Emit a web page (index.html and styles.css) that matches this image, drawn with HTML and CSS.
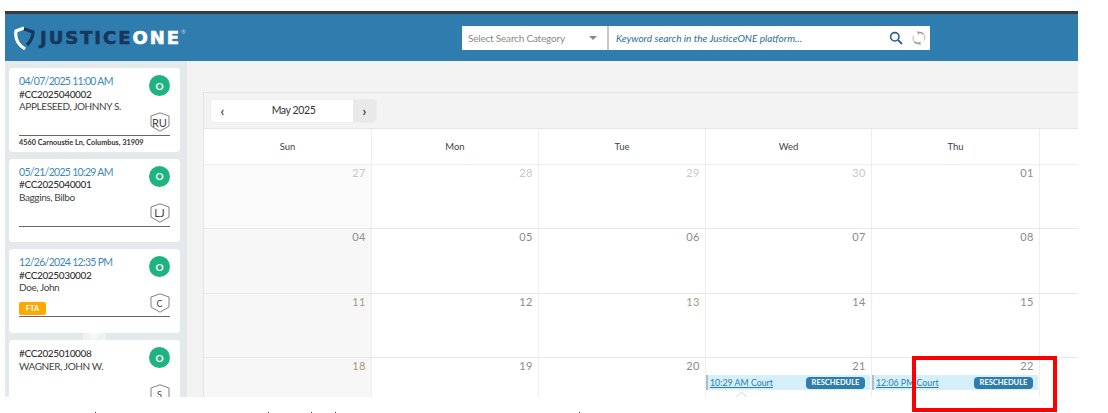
FILE: index.html
```html
<!DOCTYPE html>
<html lang="en">
<head>
<meta charset="utf-8">
<title>JusticeONE Calendar</title>
<link rel="stylesheet" href="styles.css">
</head>
<body>
<div class="app">
  <header class="topbar">
    <div class="logo">
      <svg class="logo-mark" viewBox="0 0 24 25" width="24" height="25">
        <path d="M11 2 L3 5 C2 11 4 18 12 23" fill="none" stroke="#fff" stroke-width="3.2"/>
        <path d="M11 3 L20 6 C20 11 18 15 14 19" fill="none" stroke="#17375c" stroke-width="3.2"/>
      </svg>
      <span class="logo-text">JUSTICE<span class="logo-one">ONE</span></span><span class="logo-reg">®</span>
    </div>
    <div class="search">
      <div class="search-cat"><span>Select Search Category</span><i class="caret"></i></div>
      <div class="search-input">
        <span class="search-hint">Keyword search in the JusticeONE platform...</span>
        <svg class="icon-search" viewBox="0 0 14 14" width="14" height="14"><circle cx="5.8" cy="5.8" r="4.2" fill="none" stroke="#2a5f96" stroke-width="1.6"/><path d="M9 9l4 4" stroke="#2a5f96" stroke-width="1.8"/></svg>
        <svg class="icon-refresh" viewBox="0 0 14 16" width="14" height="16"><path d="M11.5 4.2A5.2 5.2 0 0 0 7 2.600M2.400 11.800A5.2 5.2 0 0 0 7 13.400" fill="none" stroke="#9a9a9a" stroke-width="1.5"/><path d="M2 5.500A5.500 5.500 0 0 0 2.400 11.800M12 10.500A5.500 5.500 0 0 0 11.500 4.200" fill="none" stroke="#d8c9a8" stroke-width="1.3"/><path d="M5.500 .8 8 2.800 5.500 4.800ZM8.500 15.200 6 13.200 8.500 11.200Z" fill="#9a9a9a"/></svg>
      </div>
    </div>
  </header>
  <div class="content">
    <aside class="sidebar">
      <article class="card">
        <div class="card-top">
          <div class="card-info">
            <a class="card-date">04/07/2025 11:00 AM</a>
            <div class="card-num">#CC2025040002</div>
            <div class="card-name">APPLESEED, JOHNNY S.</div>
          </div>
          <div class="card-badges">
            <span class="status">O</span>
            <span class="shield"><svg viewBox="0 0 20 20" width="20" height="20"><path d="M10 .8 19 4V14L10 19.200 1 14V4Z" fill="#fff" stroke="#808080" stroke-width="1"/></svg><b>RU</b></span>
          </div>
        </div>
        <div class="card-addr">4560 Carnoustie Ln, Columbus, 31909</div>
      </article>
      <article class="card">
        <div class="card-top">
          <div class="card-info">
            <a class="card-date">05/21/2025 10:29 AM</a>
            <div class="card-num">#CC2025040001</div>
            <div class="card-name">Baggins, Bilbo</div>
          </div>
          <div class="card-badges">
            <span class="status">O</span>
            <span class="shield"><svg viewBox="0 0 20 20" width="20" height="20"><path d="M10 .8 19 4V14L10 19.200 1 14V4Z" fill="#fff" stroke="#808080" stroke-width="1"/></svg><b>LJ</b></span>
          </div>
        </div>
      </article>
      <article class="card">
        <div class="card-top">
          <div class="card-info">
            <a class="card-date">12/26/2024 12:35 PM</a>
            <div class="card-num">#CC2025030002</div>
            <div class="card-name">Doe, John</div>
            <span class="tag">FTA</span>
          </div>
          <div class="card-badges">
            <span class="status">O</span>
            <span class="shield"><svg viewBox="0 0 20 20" width="20" height="20"><path d="M10 .8 19 4V14L10 19.200 1 14V4Z" fill="#fff" stroke="#808080" stroke-width="1"/></svg><b class="small">C</b></span>
          </div>
        </div>
      </article>
      <article class="card">
        <div class="card-top">
          <div class="card-info card-info-nodate">
            <div class="card-num">#CC2025010008</div>
            <div class="card-name">WAGNER, JOHN W.</div>
          </div>
          <div class="card-badges">
            <span class="status">O</span>
            <span class="shield"><svg viewBox="0 0 20 20" width="20" height="20"><path d="M10 .8 19 4V14L10 19.200 1 14V4Z" fill="#fff" stroke="#808080" stroke-width="1"/></svg><b class="small">S</b></span>
          </div>
        </div>
      </article>
      <div class="ghost-tip"></div>
    </aside>
    <main class="main">
      <section class="panel">
        <div class="toolbar">
          <div class="month-nav">
            <span class="nav-btn">‹</span>
            <span class="month-title">May 2025</span>
            <span class="nav-btn nav-next">›</span>
          </div>
        </div>
        <div class="cal cal-head">
          <div class="dow">Sun</div><div class="dow">Mon</div><div class="dow">Tue</div><div class="dow">Wed</div><div class="dow">Thu</div><div class="dow"></div>
        </div>
        <div class="cal cal-row">
          <div class="day sun sun-out"><span class="num out">27</span></div><div class="day"><span class="num out">28</span></div><div class="day"><span class="num out">29</span></div><div class="day"><span class="num out">30</span></div><div class="day"><span class="num">01</span></div><div class="day"></div>
        </div>
        <div class="cal cal-row">
          <div class="day sun"><span class="num">04</span></div><div class="day"><span class="num">05</span></div><div class="day"><span class="num">06</span></div><div class="day"><span class="num">07</span></div><div class="day"><span class="num">08</span></div><div class="day"></div>
        </div>
        <div class="cal cal-row">
          <div class="day sun"><span class="num warm">11</span></div><div class="day"><span class="num">12</span></div><div class="day"><span class="num warm">13</span></div><div class="day"><span class="num">14</span></div><div class="day"><span class="num">15</span></div><div class="day"></div>
        </div>
        <div class="cal cal-row">
          <div class="day sun"><span class="num warm">18</span></div><div class="day"><span class="num">19</span></div><div class="day"><span class="num">20</span></div>
          <div class="day">
            <span class="num">21</span>
            <div class="event"><a class="event-link">10:29 AM Court</a><span class="pill">RESCHEDULE</span></div>
            <i class="event-tip"></i>
          </div>
          <div class="day">
            <span class="num">22</span>
            <div class="event"><a class="event-link">12:06 PM Court</a><span class="pill">RESCHEDULE</span></div>
          </div>
          <div class="day"></div>
        </div>
      </section>
    </main>
  </div>
</div>
<div class="cut-line"><i></i><i></i><i></i><i></i><i></i></div>
<div class="highlight"></div>
</body>
</html>
```
FILE: styles.css
```css
* { box-sizing: border-box; }
html, body { margin: 0; height: 413px; overflow: hidden; background: #fff; }
body { font-family: Lato, "Open Sans", sans-serif; color: #333; position: relative; }

.app {
  margin: 11px 30px 0 5px;
  height: 386px;
  display: flex;
  flex-direction: column;
  overflow: hidden;
  border-top: 3px solid #3a3a3a;
}

/* Top bar */
.topbar {
  height: 47px;
  flex: none;
  background: #2e7dae;
  display: flex;
  align-items: flex-start;
  position: relative;
}
.logo { display: flex; align-items: center; width: 457px; height: 47px; padding: 0 0 0 8px; }
.logo-mark { flex: none; margin-right: 3px; margin-top: 1px; }
.logo-text {
  font-family: "DejaVu Sans", sans-serif;
  font-weight: 700;
  font-size: 18px;
  letter-spacing: 1.95px;
  color: #17375c;
  -webkit-text-stroke: .6px currentColor;
  line-height: 1;
}
.logo-one { color: #fff; }
.logo-reg { font-size: 6px; color: #b9cfdd; align-self: flex-start; margin-top: 14px; margin-left: 0; }

.search { display: flex; height: 24px; margin-top: 12px; background: #fff; width: 468px; }
.search-cat {
  width: 147px;
  flex: none;
  display: flex;
  align-items: center;
  justify-content: space-between;
  padding: 0 10px 0 6px;
  border-right: 2px solid #c9c9c9;
  font-size: 10px;
  letter-spacing: -.2px;
  color: #8a8a8a;
}
.caret { width: 0; height: 0; border: 4px solid transparent; border-top: 4px solid #8a8a8a; border-bottom: 0; }
.search-input { flex: 1; display: flex; align-items: center; padding: 0 4px 0 7px; }
.search-hint { flex: 1; font-size: 10px; font-style: italic; color: #2a6d9e; }
.icon-search { margin-right: 9px; }

/* Layout */
.content { flex: 1; display: flex; min-height: 0; }

.sidebar {
  width: 182px;
  flex: none;
  background: #e4e9ec;
  padding: 7px 7px 0 4px;
  position: relative;
  overflow: hidden;
}
.card {
  background: #fff;
  border-radius: 4px;
  height: 83.7px;
  margin-bottom: 7px;
  padding: 6px 10px 0;
}
.card-top {
  height: 62px;
  display: flex;
  justify-content: space-between;
  border-bottom: 1px solid #666;
}
.card-info { display: flex; flex-direction: column; align-items: flex-start; font-size: 10px; line-height: 12.5px; padding-top: 1px; letter-spacing: -.4px; }
.card-date { color: #3d87b8; font-size: 10.500px; letter-spacing: -.7px; }
.card-num { color: #333; font-weight: 500; letter-spacing: -.35px; }
.card-name { color: #444; }
.card-info-nodate { padding-top: 1px; }
.card-badges { display: flex; flex-direction: column; align-items: center; padding-top: 1px; }
.status {
  width: 21px;
  height: 21px;
  border-radius: 50%;
  background: #1eb37f;
  color: #fff;
  font-size: 10px;
  font-weight: 700;
  display: flex;
  align-items: center;
  justify-content: center;
}
.shield { position: relative; width: 20px; height: 20px; margin-top: 16px; display: block; }
.shield svg { display: block; }
.shield b {
  position: absolute;
  inset: 0;
  display: flex;
  align-items: center;
  justify-content: center;
  font-size: 11px;
  font-weight: 400;
  color: #444;
}
.shield b.small { font-size: 9px; }
.card-addr { font-size: 7.3px; font-weight: 700; color: #333; margin-top: 2px; line-height: 9px; white-space: nowrap; }
.tag {
  margin-top: auto;
  margin-bottom: 1px;
  width: 27px;
  height: 13px;
  border-radius: 2px;
  background: #ffa800;
  color: #fff;
  font-size: 7.5px;
  font-weight: 700;
  line-height: 13px;
  text-align: center;
  letter-spacing: 0;
}
.ghost-tip {
  position: absolute;
  left: 78px;
  top: 272px;
  width: 23px;
  height: 18px;
  background: rgba(255, 255, 255, .4);
  border-radius: 2px;
  box-shadow: 0 0 1px rgba(0, 0, 0, .06);
}
.ghost-tip::before {
  content: "";
  position: absolute;
  left: 6px;
  top: -5px;
  width: 10px;
  height: 10px;
  background: rgba(255, 255, 255, .4);
  transform: rotate(45deg);
}

/* Calendar */
.main { flex: 1; min-width: 0; background: #f3f3f3; padding: 31px 0 0 16px; overflow: hidden; }
.panel { border: 1px solid #e5e5e5; border-width: 1px 0 0 1px; height: 100%; background: #fff; }
.toolbar { height: 36px; background: #f3f3f3; padding: 6px 0 0 6px; border-bottom: 1px solid #e5e5e5; }
.month-nav {
  width: 167px;
  height: 24px;
  display: flex;
  align-items: center;
  background: #fff;
  border-radius: 3px;
  border: 1px solid #ededed;
  overflow: hidden;
}
.nav-btn { width: 23px; flex: none; height: 100%; display: flex; align-items: center; justify-content: center; font-size: 13px; font-weight: 700; color: #444; }
.nav-next { background: #e9e9e9; }
.month-title { flex: 1; text-align: center; font-size: 10.500px; letter-spacing: -.4px; color: #333; padding-bottom: 2px; }

.cal { display: grid; grid-template-columns: 168px 167px 167px 166px 168px 167px; }
.cal-head { height: 36px; }
.cal-row { border-top: 1px solid #e8e8e8; }
.panel > .cal-row:nth-child(3) { height: 63px; border-top: 0; }
.panel > .cal-row:nth-child(4) { height: 65px; }
.panel > .cal-row:nth-child(5) { height: 64px; }
.panel > .cal-row:nth-child(6) { height: 64px; }
.dow {
  border-right: 1px solid #eee;
  display: flex;
  align-items: center;
  justify-content: center;
  font-size: 9.500px;
  color: #444;
  border-bottom: 1px solid #eee;
}
.day { border-right: 1px solid #eee; background: #fff; position: relative; }
.sun { background: #f7f7f7; }
.sun-out { background: #fafafa; }
.num { display: block; text-align: right; padding: 0 5px; font-size: 11px; line-height: 14px; color: #8b8b8b; letter-spacing: .5px; margin-top: 1px; }
.num.out { color: #c8c8c8; }
.num.warm { color: #a8987a; }
.event {
  height: 15px;
  margin-top: 2px;
  margin-right: 1px;
  background: #d5effb;
  border-left: 2px solid #a9c0cc;
  display: flex;
  align-items: center;
  justify-content: space-between;
  padding: 0 5px 0 2px;
}
.event-link { font-size: 8.800px; color: #2b7cae; text-decoration: underline; }
.pill {
  background: #2e7dae;
  color: #fff;
  font-size: 7.5px;
  font-weight: 700;
  border-radius: 4px;
  width: 59px;
  height: 12px;
  line-height: 12px;
  text-align: center;
}
.event-tip {
  position: absolute;
  left: 31px;
  top: 35px;
  width: 9px;
  height: 9px;
  background: #fff;
  border: 1px solid #ddd;
  transform: rotate(45deg);
}

/* Clipped tops of the caption under the screenshot */
.cut-line { height: 1px; margin-top: 15px; display: flex; }
.cut-line i { width: 1px; height: 1px; background: #333; flex: none; }
.cut-line i:nth-child(1) { margin-left: 95px; }
.cut-line i:nth-child(2) { margin-left: 172px; }
.cut-line i:nth-child(3) { margin-left: 42px; }
.cut-line i:nth-child(4) { margin-left: 23px; }
.cut-line i:nth-child(5) { margin-left: 243px; }

.highlight {
  position: absolute;
  left: 912px;
  top: 356px;
  width: 145px;
  height: 56px;
  border: 4px solid #f00;
}
```
